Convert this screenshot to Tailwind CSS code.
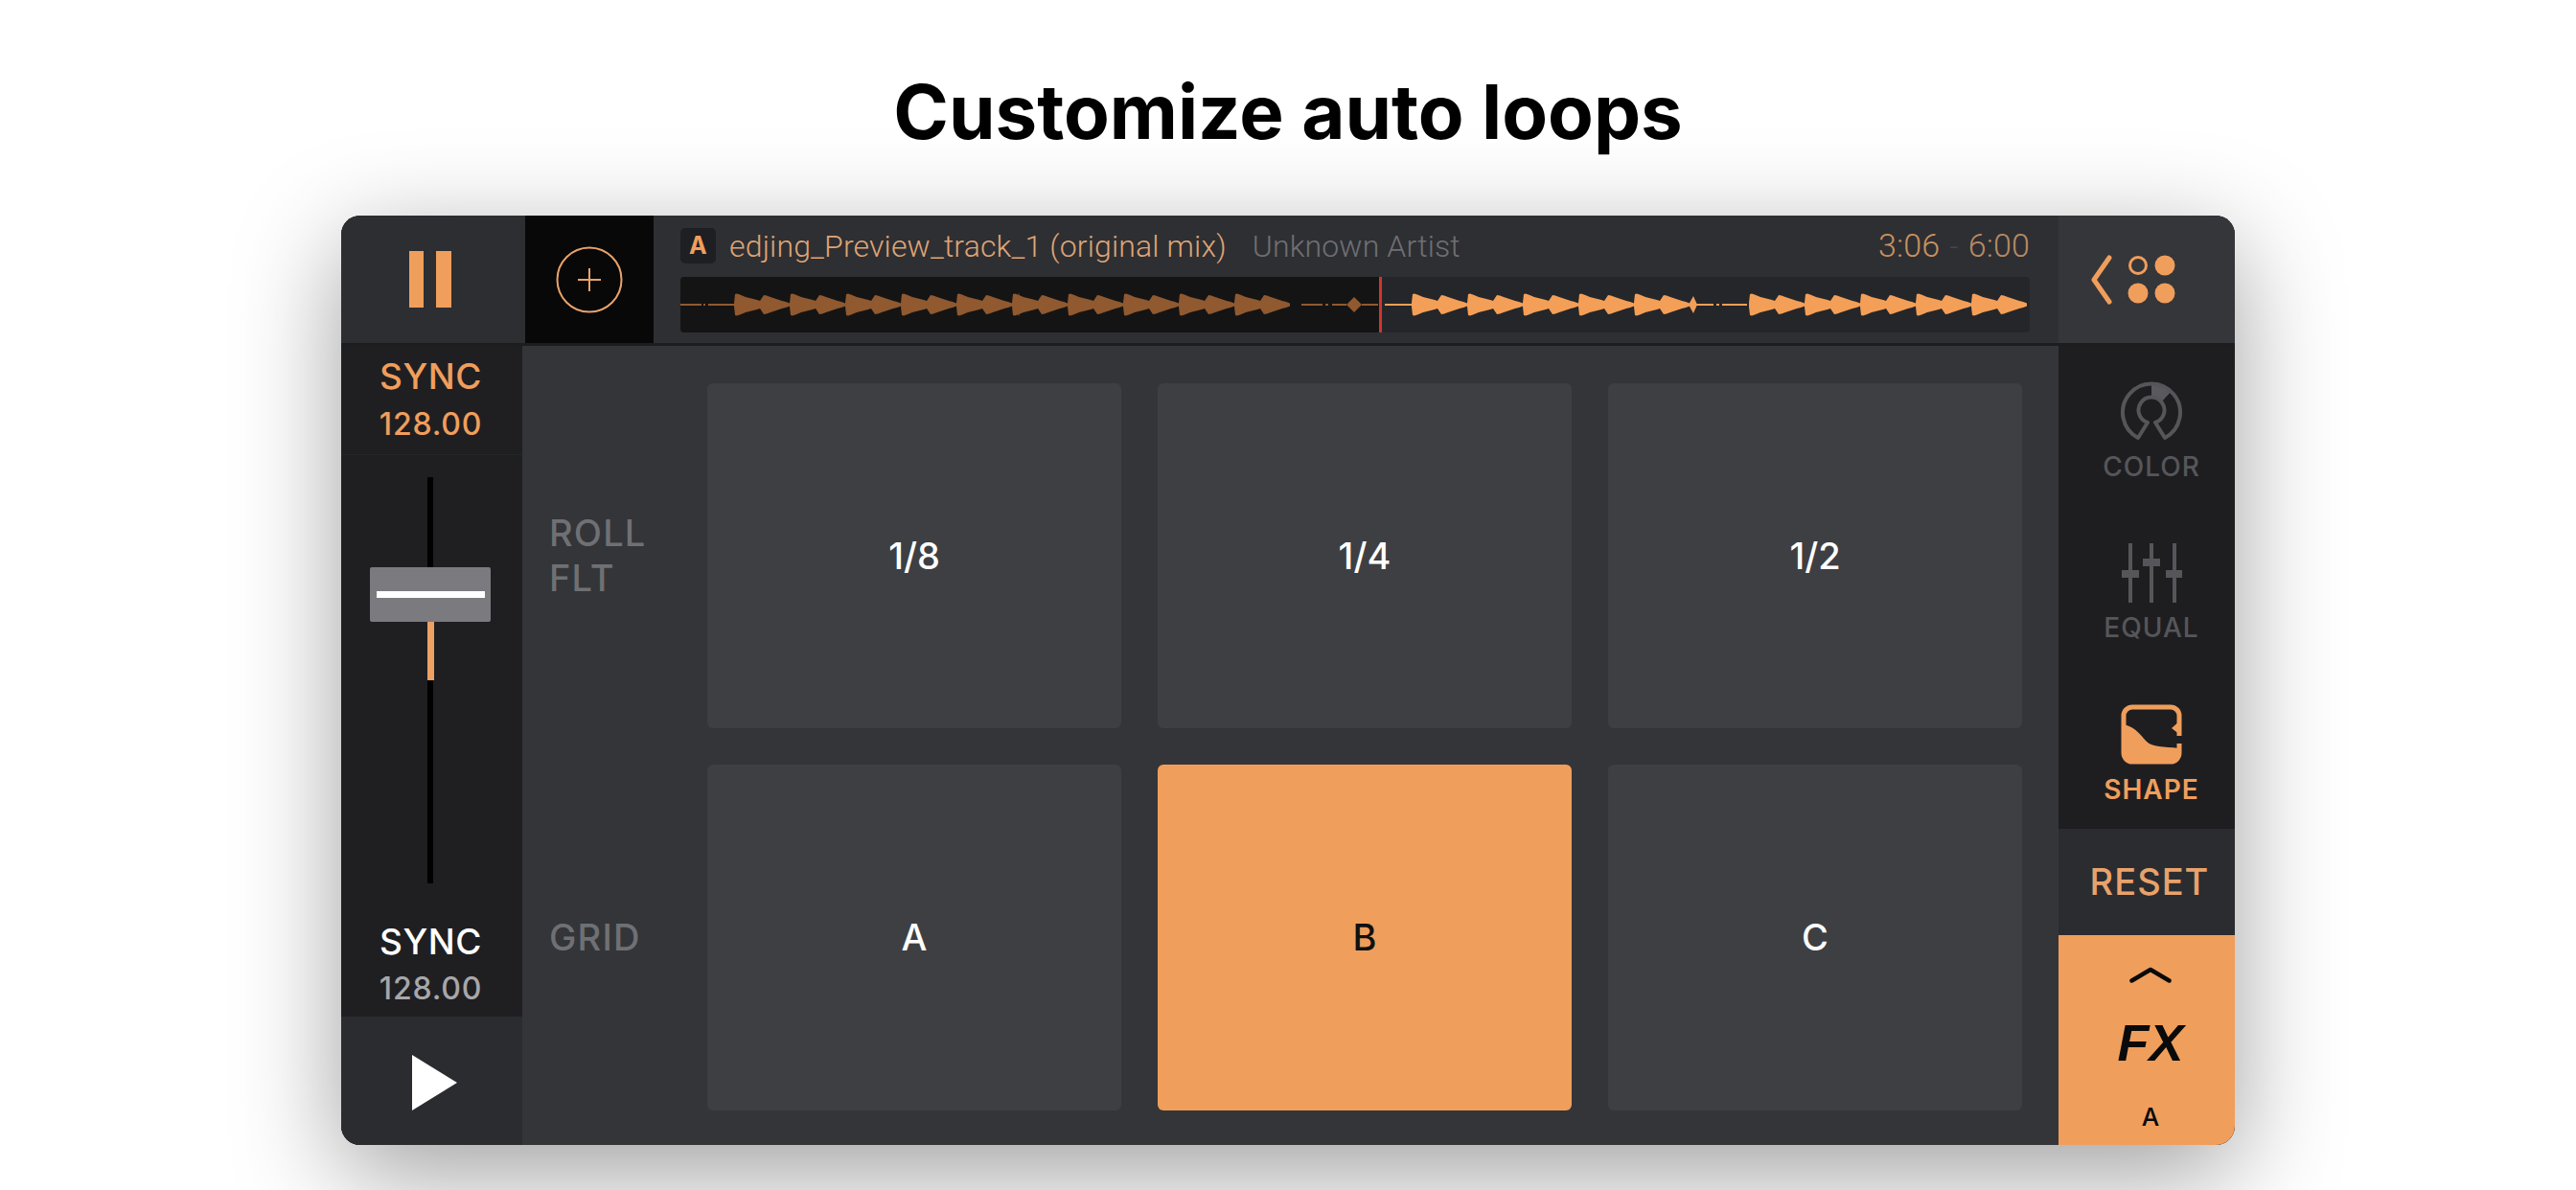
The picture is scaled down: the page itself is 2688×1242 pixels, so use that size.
<!DOCTYPE html>
<html lang="en">

<head>
    <meta charset="UTF-8">
    <title>Customize auto loops</title>
    <script src="https://cdn.jsdelivr.net/npm/@tailwindcss/browser@4"></script>
</head>

<body class="bg-white h-[1242px] overflow-hidden font-['Inter',sans-serif]">
    <div class="h-[225px] flex justify-center pt-[72px]">
        <h1 class="text-[78px] leading-[90px] font-bold text-black">Customize auto loops</h1>
    </div>

    <div class="mx-auto w-[1976px] h-[970px] rounded-[20px] overflow-hidden flex flex-col bg-[#343539] shadow-[0_30px_110px_rgba(0,0,0,0.38)]">
        <!-- top bar -->
        <div class="h-[136px] flex shrink-0 border-b-[3px] border-[#1c1d1f] bg-[#2e2f33]">
            <div class="w-[192px] flex items-center justify-center gap-[13px] bg-[#2d2e32] pr-[6px]">
                <div class="w-[15px] h-[59px] bg-[#f09e5c]"></div>
                <div class="w-[16px] h-[59px] bg-[#f09e5c]"></div>
            </div>
            <div class="w-[134px] flex items-center justify-center bg-[#080808]">
                <svg class="w-[70px] h-[70px]" viewBox="0 0 70 70" fill="none" stroke="#e8a36b" stroke-width="2">
                    <circle cx="35" cy="35" r="33.5" />
                    <path d="M35 23v24M23 35h24" />
                </svg>
            </div>
            <div class="flex-1 pl-[28px] pr-[30px] pt-[13px]">
                <div class="h-[37px] flex items-center font-['Roboto',sans-serif] font-light text-[32px] tracking-[0.15px] whitespace-nowrap">
                    <span class="w-[37px] h-[37px] rounded-[5px] bg-[#1e1f22] flex items-center justify-center text-[#f09e5c] text-[25px] font-bold font-['Inter',sans-serif]">A</span>
                    <span class="ml-[14px] text-[#dfa475]">edjing_Preview_track_1 (original mix)</span>
                    <span class="ml-[27px] text-[#6e6f73]">Unknown Artist</span>
                    <span class="ml-auto text-[34px] text-[#c9925f]">3:06</span>
                    <span class="mx-[10px] text-[#45464a]">-</span>
                    <span class="text-[34px] text-[#b98a63]">6:00</span>
                </div>
                <svg class="mt-[14px] w-[1408px] h-[58px] block" viewBox="0 0 1408 58">
                    <defs>
                        <path id="lobe" d="M0 27L1 18L3 17.500L6 18.500L12 21L18 22.500L24 24L27 25L29 22L31 19L34 19.500L38 21L44 23L50 25L54 26L58 27.500L58 30.500L54 32L50 33L44 35L38 37L34 38.500L31 39L29 36L27 33L24 34L18 35.500L12 37L6 39.500L3 40.500L1 40L0 31Z" />
                    </defs>
                    <rect x="0" y="0" width="1408" height="58" rx="4" fill="#252629" />
                    <path d="M4 0H730V58H4a4 4 0 0 1-4-4V4a4 4 0 0 1 4-4Z" fill="#141415" />
                    <g fill="#90592f">
                        <rect x="0" y="28" width="22" height="2" />
                        <rect x="24" y="28" width="2" height="2" />
                        <rect x="29" y="28" width="27" height="2" />
                        <use href="#lobe" x="56" />
                        <use href="#lobe" x="114" />
                        <use href="#lobe" x="172" />
                        <use href="#lobe" x="230" />
                        <use href="#lobe" x="288" />
                        <use href="#lobe" x="346" />
                        <use href="#lobe" x="404" />
                        <use href="#lobe" x="462" />
                        <use href="#lobe" x="520" />
                        <use href="#lobe" x="578" />
                        <path d="M351 29L353 16L355 29L353 42Z" />
                        <rect x="648" y="28" width="22" height="2" />
                        <rect x="673" y="28" width="3" height="2" />
                        <rect x="680" y="28" width="15" height="2" />
                        <path d="M695 29L703 21L711 29L703 37Z" />
                        <rect x="711" y="28" width="17" height="2" />
                    </g>
                    <g fill="#f49f58">
                        <rect x="735" y="28" width="28" height="2" />
                        <use href="#lobe" x="763" />
                        <use href="#lobe" x="821" />
                        <use href="#lobe" x="879" />
                        <use href="#lobe" x="937" />
                        <use href="#lobe" x="995" />
                        <path d="M1052 29L1057 20L1061 29L1057 38Z" />
                        <rect x="1060" y="28" width="18" height="2" />
                        <rect x="1081" y="28" width="3" height="2" />
                        <rect x="1087" y="28" width="26" height="2" />
                        <use href="#lobe" x="1115" />
                        <use href="#lobe" x="1173" />
                        <use href="#lobe" x="1231" />
                        <use href="#lobe" x="1289" />
                        <use href="#lobe" x="1347" />
                    </g>
                    <rect x="729" y="0" width="3" height="58" fill="#d0352e" />
                </svg>
            </div>
            <div class="w-[184px] flex items-center justify-center bg-[#35363a] pr-[30px]">
                <svg class="w-[90px] h-[52px]" viewBox="0 0 90 52" fill="none">
                    <path d="M21 3L5 26L21 49" stroke="#f09e5c" stroke-width="5" stroke-linecap="round" stroke-linejoin="round" />
                    <circle cx="51" cy="11" r="8.500" stroke="#f09e5c" stroke-width="3" />
                    <circle cx="79" cy="11" r="10.500" fill="#f09e5c" />
                    <circle cx="51" cy="40" r="10.500" fill="#f09e5c" />
                    <circle cx="79" cy="40" r="10.500" fill="#f09e5c" />
                </svg>
            </div>
        </div>

        <div class="flex-1 flex min-h-0">
            <!-- left column -->
            <div class="w-[189px] shrink-0 flex flex-col bg-[#1f1f22]">
                <div class="h-[114px] flex flex-col items-center justify-center pr-[2px] border-b border-[#26272a] text-[#f09e5c]">
                    <span class="text-[37px] leading-[46px] font-medium tracking-[0.5px] -mt-[2px]">SYNC</span>
                    <span class="text-[32px] leading-[42px] font-medium tracking-[0.8px] mt-[6px]">128.00</span>
                </div>
                <div class="flex-1 relative flex justify-center pt-[23px] pr-[3px]">
                    <div class="w-[6px] h-[424px] bg-black"></div>
                    <div class="absolute left-[90px] top-[174px] w-[7px] h-[61px] bg-[#eda163]"></div>
                    <div class="absolute left-[30px] top-[117px] w-[126px] h-[57px] rounded-[2px] bg-[#7a7a7f] flex items-center justify-center">
                        <div class="w-[113px] h-[7px] bg-white"></div>
                    </div>
                </div>
                <div class="h-[113px] flex flex-col items-center justify-center pr-[2px] pt-[6px] text-white">
                    <span class="text-[37px] leading-[46px] font-medium tracking-[0.5px] -mt-[2px]">SYNC</span>
                    <span class="text-[32px] leading-[42px] font-medium tracking-[0.8px] mt-[5px] text-[#a7a7aa]">128.00</span>
                </div>
                <div class="h-[134px] bg-[#2b2c30] flex items-center justify-center pl-[5px] pt-[4px]">
                    <svg class="w-[47px] h-[58px]" viewBox="0 0 47 58">
                        <path d="M0 0L47 29L0 58Z" fill="#fff" />
                    </svg>
                </div>
            </div>

            <!-- pads -->
            <div class="flex-1 grid grid-cols-[127px_432px_432px_432px] grid-rows-[360px_361px] gap-x-[38px] gap-y-[38px] pl-[28px] pt-[39px] text-white text-[38px] font-medium">
                <div class="self-center text-[#6f7074] leading-[47px] tracking-[1.2px]">ROLL<br>FLT</div>
                <div class="rounded-[6px] bg-[#3e3f43] flex items-center justify-center">1/8</div>
                <div class="rounded-[6px] bg-[#3e3f43] flex items-center justify-center">1/4</div>
                <div class="rounded-[6px] bg-[#3e3f43] flex items-center justify-center">1/2</div>
                <div class="self-center text-[#6f7074] tracking-[1.2px]">GRID</div>
                <div class="rounded-[6px] bg-[#3e3f43] flex items-center justify-center">A</div>
                <div class="rounded-[6px] bg-[#f09e5c] flex items-center justify-center text-[#111]">B</div>
                <div class="rounded-[6px] bg-[#3e3f43] flex items-center justify-center">C</div>
            </div>

            <!-- right column -->
            <div class="w-[184px] shrink-0 flex flex-col bg-[#1e1e21]">
                <div class="h-[504px] flex flex-col items-center pt-[36px] pl-[10px] text-[28px] font-medium tracking-[1px] text-[#56565a]">
                    <svg class="w-[64px] h-[64px]" viewBox="0 0 64 64" fill="none">
                        <path d="M32 2A30 30 0 0 1 53 11L42 23A15 15 0 0 0 32 18Z" fill="#5a5a5e" />
                        <path d="M18 60A30 30 0 1 1 46 60L36 44A13.500 13.500 0 1 0 28 44Z" stroke="#56565a" stroke-width="4" stroke-linejoin="round" />
                    </svg>
                    <span class="mt-[8px] leading-[36px]">COLOR</span>
                    <svg class="w-[64px] h-[64px] mt-[61px]" viewBox="0 0 64 64" fill="#56565a">
                        <rect x="8" y="1" width="4" height="62" />
                        <rect x="30" y="1" width="4" height="62" />
                        <rect x="54" y="1" width="4" height="62" />
                        <rect x="1" y="29" width="18" height="8" />
                        <rect x="23" y="17" width="18" height="8" />
                        <rect x="47" y="29" width="18" height="8" />
                    </svg>
                    <span class="mt-[7px] leading-[36px]">EQUAL</span>
                    <svg class="w-[64px] h-[63px] mt-[62px]" viewBox="0 0 64 63" fill="none">
                        <rect x="3" y="3" width="58" height="57" rx="9" stroke="#f09e5c" stroke-width="5" />
                        <path d="M3 21C16 24 21 33 27 39C33 45 44 44 61 46V52A8 8 0 0 1 53 60H11A8 8 0 0 1 3 52Z" fill="#f09e5c" />
                        <path d="M53 25L62 17V32Z" fill="#f09e5c" />
                        <rect x="57" y="33" width="7" height="8" fill="#1e1e21" />
                    </svg>
                    <span class="mt-[8px] leading-[36px] font-semibold text-[#f09e5c]">SHAPE</span>
                </div>
                <div class="h-[111px] bg-[#2b2c30] flex items-center justify-center pl-[6px] text-[38px] font-medium text-[#e8a26b] tracking-[1px]">RESET</div>
                <div class="flex-1 bg-[#f09e5c] flex flex-col items-center pl-[8px] pt-[33px] text-[#0a0a0a]">
                    <svg class="w-[44px] h-[17px]" viewBox="0 0 44 17" fill="none">
                        <path d="M2.500 14.500L22 3L41.500 14.500" stroke="#0a0a0a" stroke-width="4.500" stroke-linecap="round" stroke-linejoin="round" />
                    </svg>
                    <span class="mt-[32px] font-['Liberation_Sans',sans-serif] text-[54px] leading-[60px] font-bold italic">FX</span>
                    <span class="mt-[32px] text-[26px] leading-[32px] font-medium">A</span>
                </div>
            </div>
        </div>
    </div>
</body>

</html>
